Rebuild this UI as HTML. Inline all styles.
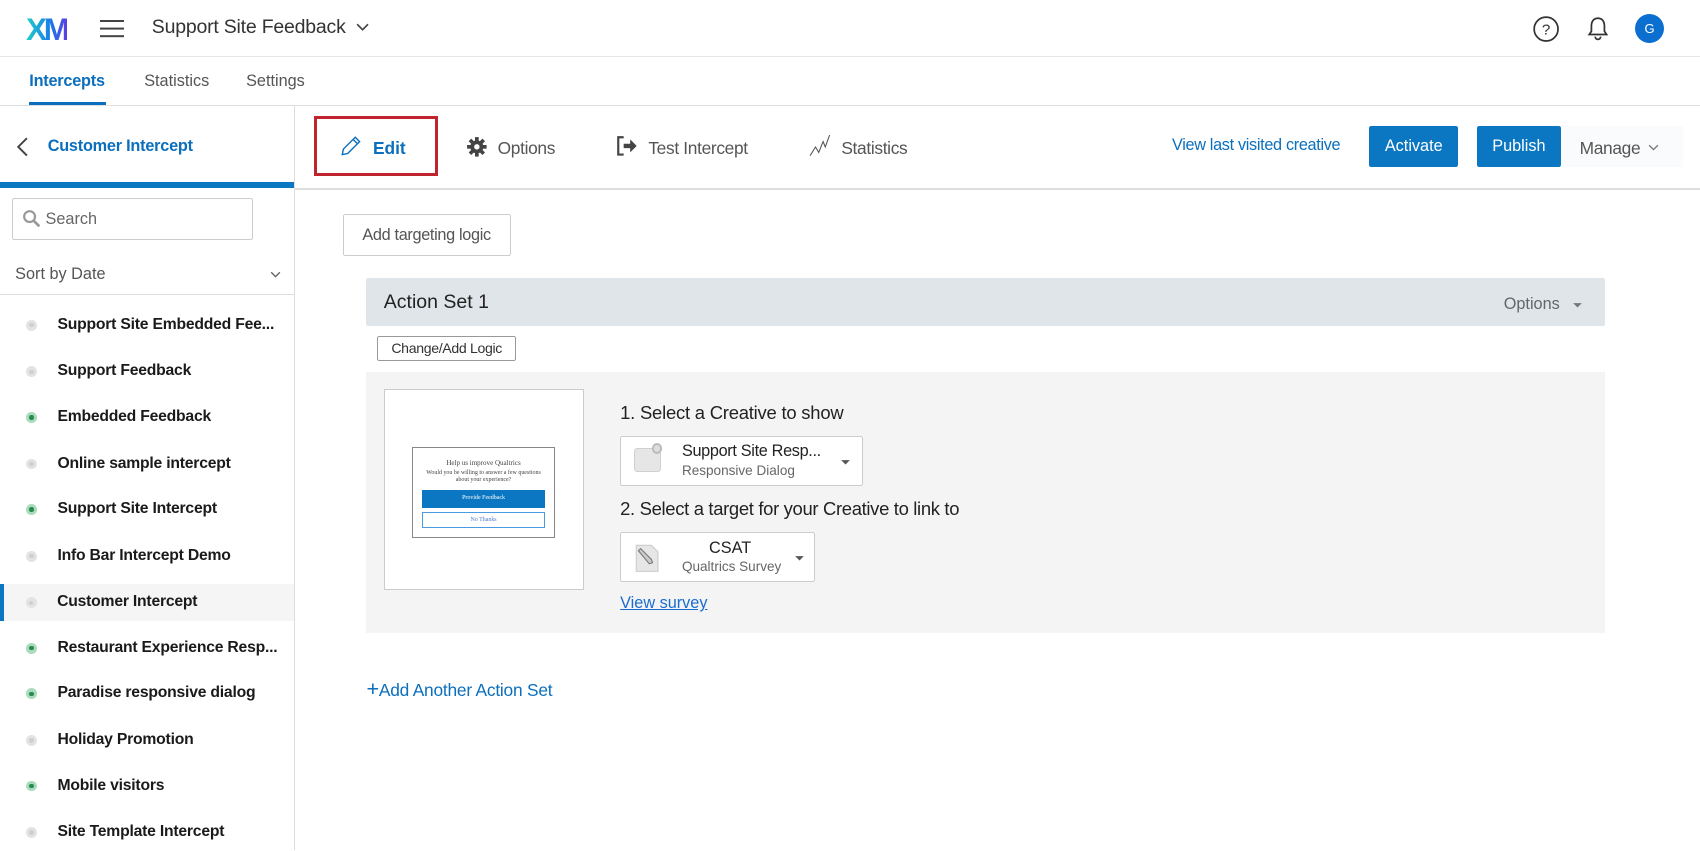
<!DOCTYPE html>
<html><head><meta charset="utf-8"><style>
html{zoom:1.08418}
*{box-sizing:border-box;margin:0;padding:0}
body{width:1568px;height:784px;overflow:hidden;background:#fff;font-family:"Liberation Sans",sans-serif;color:#222;position:relative}
.a{position:absolute}
.blue{color:#0b6fbd}
.item{position:absolute;left:0;width:271px;height:34px;font-weight:bold;font-size:14.5px;line-height:34px;padding-left:53px;color:#1a1a1a;letter-spacing:-0.2px}
.dot{position:absolute;left:24px;top:12px;width:10px;height:10px;border-radius:50%;background:#e3e3e3}
.dot.g{background:#a9dcbc}
.dot.g:after{content:"";position:absolute;left:3px;top:3px;width:4px;height:4px;border-radius:50%;background:#2d8a4e}
.dot:not(.g):after{content:"";position:absolute;left:3px;top:3px;width:4px;height:4px;border-radius:50%;background:#cfcfcf}
.btn{position:absolute;background:#0b77c2;color:#fff;font-size:15px;text-align:center;border-radius:2px}
</style></head><body>
<div class="a" style="left:0;top:52px;width:1568px;height:1px;background:#e6e6e6"></div>
<div class="a" style="left:24px;top:11px;font-size:29px;font-weight:bold;letter-spacing:-3px;background:linear-gradient(90deg,#1fd0c6,#1a7be8 60%,#5b3fe0);-webkit-background-clip:text;color:transparent">XM</div>
<div class="a" style="left:92px;top:18px;width:22px;height:2px;background:#444;box-shadow:0 7px 0 #444,0 14px 0 #444"></div>
<div class="a" style="left:140px;top:15px;font-size:18px;color:#333;letter-spacing:-0.2px">Support Site Feedback</div>
<svg class="a" style="left:327px;top:19px" width="14" height="10"><path d="M2 3l5 5 5-5" fill="none" stroke="#444" stroke-width="1.5"/></svg>
<svg class="a" style="left:1413px;top:14px" width="26" height="26"><circle cx="13" cy="13" r="11" fill="none" stroke="#333" stroke-width="1.6"/><text x="13" y="18" font-size="14" text-anchor="middle" font-family="Liberation Sans" fill="#333">?</text></svg>
<svg class="a" style="left:1463px;top:14px" width="22" height="24"><path d="M11 3c-4 0-6 3-6 7v5l-2 3h16l-2-3v-5c0-4-2-7-6-7z M8.5 20a2.5 2.5 0 005 0" fill="none" stroke="#333" stroke-width="1.6"/></svg>
<div class="a" style="left:1508px;top:13px;width:27px;height:27px;border-radius:50%;background:#0b6fd0;color:#fff;font-size:12px;text-align:center;line-height:27px">G</div>
<div class="a" style="left:27px;top:66px;font-size:15px;font-weight:bold;letter-spacing:-0.2px"><span class="blue">Intercepts</span></div>
<div class="a" style="left:27px;top:94px;width:71px;height:3px;background:#0b6fbd"></div>
<div class="a" style="left:133px;top:66px;font-size:15px;color:#555">Statistics</div>
<div class="a" style="left:227px;top:66px;font-size:15px;color:#555">Settings</div>
<div class="a" style="left:0;top:97px;width:1568px;height:1px;background:#ddd"></div>
<div class="a" style="left:271px;top:97px;width:1px;height:687px;background:#ddd"></div>
<svg class="a" style="left:14px;top:125px" width="14" height="20"><path d="M11 2L3 10l8 8" fill="none" stroke="#444" stroke-width="1.8"/></svg>
<div class="a blue" style="left:44px;top:126px;font-size:15px;font-weight:bold;letter-spacing:-0.2px">Customer Intercept</div>
<div class="a" style="left:0;top:168px;width:271px;height:5px;background:#0b77c2"></div>
<div class="a" style="left:11px;top:183px;width:222px;height:38px;border:1px solid #ccc;border-radius:2px"></div>
<svg class="a" style="left:20px;top:193px" width="18" height="18"><circle cx="7" cy="7" r="5" fill="none" stroke="#999" stroke-width="2"/><path d="M11 11l5 5" stroke="#999" stroke-width="2.5"/></svg>
<div class="a" style="left:42px;top:194px;font-size:15px;color:#666">Search</div>
<div class="a" style="left:14px;top:244px;font-size:15px;color:#555">Sort by Date</div>
<svg class="a" style="left:248px;top:248px" width="12" height="10"><path d="M2 3l4 4 4-4" fill="none" stroke="#666" stroke-width="1.3"/></svg>
<div class="a" style="left:0;top:271px;width:271px;height:1px;background:#ddd"></div>
<div class="item" style="top:283px"><span class="dot"></span>Support Site Embedded Fee...</div>
<div class="item" style="top:326px"><span class="dot"></span>Support Feedback</div>
<div class="item" style="top:368px"><span class="dot g"></span>Embedded Feedback</div>
<div class="item" style="top:411px"><span class="dot"></span>Online sample intercept</div>
<div class="item" style="top:453px"><span class="dot g"></span>Support Site Intercept</div>
<div class="item" style="top:496px"><span class="dot"></span>Info Bar Intercept Demo</div>
<div class="item" style="top:539px;background:#f5f5f5;border-left:4px solid #0b77c2;padding-left:49px"><span class="dot" style="left:20px"></span>Customer Intercept</div>
<div class="item" style="top:581px"><span class="dot g"></span>Restaurant Experience Resp...</div>
<div class="item" style="top:623px"><span class="dot g"></span>Paradise responsive dialog</div>
<div class="item" style="top:666px"><span class="dot"></span>Holiday Promotion</div>
<div class="item" style="top:708px"><span class="dot g"></span>Mobile visitors</div>
<div class="item" style="top:751px"><span class="dot"></span>Site Template Intercept</div>
<div class="a" style="left:290px;top:107px;width:114px;height:55px;border:3px solid #c0242f"></div>
<svg class="a" style="left:313px;top:124px" width="22" height="22"><path d="M3 19l1-5L15 3l4 4L8 18z M13 5l4 4" fill="none" stroke="#0b6fbd" stroke-width="1.3"/></svg>
<div class="a blue" style="left:344px;top:127px;font-size:16px;font-weight:bold">Edit</div>
<svg class="a" style="left:430px;top:125px" width="20" height="20"><g fill="#444"><circle cx="10" cy="10" r="6"/><rect x="8.3" y="1" width="3.4" height="18"/><rect x="1" y="8.3" width="18" height="3.4"/><rect x="8.3" y="1" width="3.4" height="18" transform="rotate(45 10 10)"/><rect x="8.3" y="1" width="3.4" height="18" transform="rotate(-45 10 10)"/></g><circle cx="10" cy="10" r="2.5" fill="#fff"/></svg>
<div class="a" style="left:459px;top:127px;font-size:16px;color:#555;letter-spacing:-0.3px">Options</div>
<svg class="a" style="left:567px;top:124px" width="22" height="22"><path d="M8 3H3v16h5" fill="none" stroke="#444" stroke-width="2"/><path d="M8 9h6V5l6 6-6 6v-4H8z" fill="#444"/></svg>
<div class="a" style="left:598px;top:127px;font-size:16px;color:#555;letter-spacing:-0.3px">Test Intercept</div>
<svg class="a" style="left:746px;top:124px" width="22" height="22"><path d="M1 20L6 12l3 5 4-10 2 5 4-11" fill="none" stroke="#555" stroke-width="1"/></svg>
<div class="a" style="left:776px;top:127px;font-size:16px;color:#555;letter-spacing:-0.3px">Statistics</div>
<div class="a blue" style="left:1081px;top:125px;font-size:15px;letter-spacing:-0.3px">View last visited creative</div>
<div class="btn" style="left:1263px;top:116px;width:82px;height:38px;line-height:38px">Activate</div>
<div class="btn" style="left:1362px;top:116px;width:78px;height:38px;line-height:38px">Publish</div>
<div class="a" style="left:1441px;top:116px;width:111px;height:38px;background:#fafbfc"></div>
<div class="a" style="left:1457px;top:127px;font-size:16px;color:#555;letter-spacing:-0.3px">Manage</div>
<svg class="a" style="left:1519px;top:131px" width="12" height="10"><path d="M2 3l4 4 4-4" fill="none" stroke="#777" stroke-width="1.2"/></svg>
<div class="a" style="left:272px;top:173px;width:1296px;height:2px;background:#ddd"></div>
<div class="a" style="left:316px;top:197px;width:155px;height:39px;border:1px solid #ccc;border-radius:2px;font-size:15px;color:#555;text-align:center;line-height:37px;letter-spacing:-0.3px">Add targeting logic</div>
<div class="a" style="left:338px;top:256px;width:1142px;height:45px;background:#dfe5e9;border-radius:2px"></div>
<div class="a" style="left:354px;top:268px;font-size:18px;color:#222">Action Set 1</div>
<div class="a" style="left:1387px;top:272px;font-size:15px;color:#666">Options</div>
<svg class="a" style="left:1449px;top:278px" width="12" height="8"><path d="M2 2h8L6 6z" fill="#777"/></svg>
<div class="a" style="left:348px;top:310px;width:128px;height:23px;border:1px solid #999;border-radius:2px;font-size:13px;color:#333;text-align:center;line-height:21px;letter-spacing:-0.3px">Change/Add Logic</div>
<div class="a" style="left:338px;top:343px;width:1142px;height:241px;background:#f4f4f4"></div>
<div class="a" style="left:354px;top:359px;width:185px;height:185px;background:#fff;border:1px solid #ccc"></div>
<div class="a" style="left:380px;top:412px;width:132px;height:84px;border:1px solid #888;background:#fff;font-family:'Liberation Serif',serif;text-align:center;color:#444">
<div style="font-size:6.5px;margin-top:10px">Help us improve Qualtrics</div>
<div style="font-size:5.5px;margin-top:3px;line-height:7px">Would you be willing to answer a few questions<br>about your experience?</div>
<div style="margin:5px 8px 0;height:16px;background:#0b77c2;color:#fff;font-size:5.5px;line-height:16px">Provide Feedback</div>
<div style="margin:4px 8px 0;height:15px;border:1px solid #4a9be0;color:#4a7bd0;font-size:5.5px;line-height:13px">No Thanks</div>
</div>
<div class="a" style="left:572px;top:371px;font-size:17px;color:#222;letter-spacing:-0.2px">1. Select a Creative to show</div>
<div class="a" style="left:572px;top:402px;width:224px;height:46px;background:#fff;border:1px solid #ccc;border-radius:2px"></div>
<div class="a" style="left:585px;top:413px;width:25px;height:22px;background:#e6e6e6;border-radius:3px;border:1px solid #d0d0d0"></div>
<div class="a" style="left:601px;top:409px;width:10px;height:10px;border-radius:50%;background:#ddd;border:2px solid #bbb"></div>
<div class="a" style="left:629px;top:408px;font-size:15px;color:#222;letter-spacing:-0.3px">Support Site Resp...</div>
<div class="a" style="left:629px;top:427px;font-size:12.5px;color:#666">Responsive Dialog</div>
<svg class="a" style="left:774px;top:422px" width="12" height="8"><path d="M2 2h8L6 6z" fill="#555"/></svg>
<div class="a" style="left:572px;top:459px;font-size:17px;color:#222;letter-spacing:-0.3px">2. Select a target for your Creative to link to</div>
<div class="a" style="left:572px;top:491px;width:180px;height:46px;background:#fff;border:1px solid #ccc;border-radius:2px"></div>
<svg class="a" style="left:584px;top:499px" width="26" height="30"><path d="M3 4h14l6 6v18H3z" fill="#e6e6e6" stroke="#ccc"/><path d="M5 9l10 12 3-1-1-3L7 7z" fill="#ccc" stroke="#777" stroke-width="1"/></svg>
<div class="a" style="left:654px;top:497px;font-size:15px;color:#222">CSAT</div>
<div class="a" style="left:629px;top:516px;font-size:12.5px;color:#666">Qualtrics Survey</div>
<svg class="a" style="left:731px;top:511px" width="12" height="8"><path d="M2 2h8L6 6z" fill="#555"/></svg>
<div class="a" style="left:572px;top:548px;font-size:15px;color:#1a6dd0;text-decoration:underline">View survey</div>
<div class="a blue" style="left:338px;top:627px;font-size:16px;letter-spacing:-0.2px"><span style="font-size:20px;line-height:16px">+</span>Add Another Action Set</div>
</body></html>
